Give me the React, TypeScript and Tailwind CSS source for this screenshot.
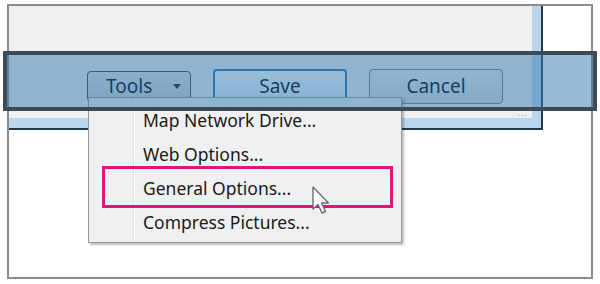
import React from "react";

const font = { fontFamily: '"Noto Sans", "Open Sans", Arial, sans-serif' };

export default function App() {
  return (
    <div className="relative w-[600px] h-[284px] overflow-hidden bg-white pt-[4px] pl-[7px]" style={font}>
      {/* outer frame */}
      <div className="w-[586px] h-[275px] border-2 border-[#8c8c8c] bg-white">
        {/* dialog window */}
        <div className="w-[534px] h-[124px] bg-[#b8d6ee] border-r-2 border-b-2 border-[#1f3b4d] pr-[9px] pb-[10px]">
          <div className="relative h-full bg-[#f0f0f0] flex flex-col justify-end pb-[14px]">
            <div className="flex items-center pl-[78px] h-[36px]">
              <button className="w-[104px] h-[31px] rounded-[4px] border border-[#3e3e3e] bg-gradient-to-b from-[#e6e6e6] to-[#cdcdcd] flex items-center justify-between pl-[18px] pr-[9px] text-[19px] text-black leading-none">
                <span>Tools</span>
                <span className="block w-0 h-0 border-l-[4px] border-r-[4px] border-t-[5px] border-l-transparent border-r-transparent border-t-[#1a1a1a]" />
              </button>
              <button className="ml-[22px] w-[134px] h-[35px] rounded-[4px] border-2 border-[#2a6a9e] bg-gradient-to-b from-[#ffffff] to-[#e2edf7] text-[19px] text-black leading-none">
                Save
              </button>
              <button className="ml-[22px] w-[134px] h-[35px] rounded-[4px] border border-[#7d7d7d] bg-gradient-to-b from-[#f2f2f2] to-[#dadada] text-[19px] text-black leading-none">
                Cancel
              </button>
            </div>
            <div className="absolute right-[4px] bottom-[1px] text-[9px] leading-none text-[#a0a0a0] tracking-[1px]">...</div>
          </div>
        </div>
      </div>

      {/* dropdown menu */}
      <div className="absolute left-[88px] top-[97px] w-[314px] h-[146px] bg-[#f0f0f0] border border-[#979797] shadow-[2px_2px_2px_rgba(0,0,0,0.25)] flex">
        <div className="w-[45px] h-full border-r border-[#e0e0e0] shadow-[1px_0_0_#ffffff]" />
        <div className="flex-1 pt-[5px] pl-[9px] text-[17.5px] text-[#1a1a1a]">
          <div className="h-[34px] flex items-center">Map Network Drive...</div>
          <div className="h-[34px] flex items-center">Web Options...</div>
          <div className="h-[34px] flex items-center">General Options...</div>
          <div className="h-[34px] flex items-center">Compress Pictures...</div>
        </div>
      </div>

      {/* highlight band overlay */}
      <div className="absolute left-[3px] right-[3px] top-[51px] h-[60px] border-4 border-[#3b4a56] bg-[#2f79b1]/50 pointer-events-none" />

      {/* pink highlight box */}
      <div className="absolute left-[102px] top-[166px] w-[291px] h-[42px] border-[3px] border-[#e3147e]" />

      {/* cursor */}
      <svg className="absolute left-[311px] top-[186px]" width="22" height="30" viewBox="0 0 22 30">
        <path d="M2 1 L2 23 L7 18.5 L11 27 L14.5 25.5 L10.5 17 L17.5 17 Z" fill="#ffffff" stroke="#6d6d6d" strokeWidth="1.4" strokeLinejoin="round" />
      </svg>
    </div>
  );
}
